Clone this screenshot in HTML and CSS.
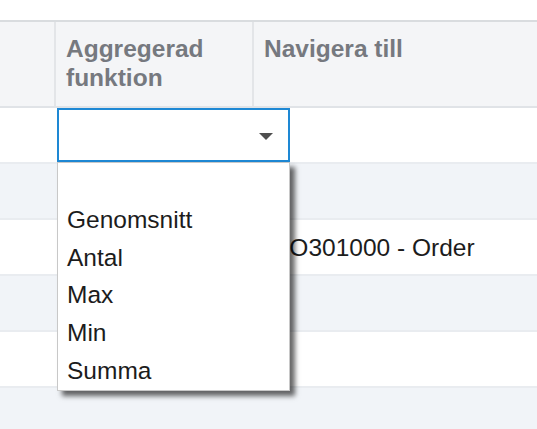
FILE: index.html
```html
<!DOCTYPE html>
<html lang="sv">
<head>
<meta charset="utf-8">
<title>Grid</title>
<link rel="stylesheet" href="styles.css">
</head>
<body>
<div class="page">
  <div class="grid">
    <div class="row header">
      <div class="cell c1"></div>
      <div class="cell c2">Aggregerad<br>funktion</div>
      <div class="cell c3">Navigera till</div>
    </div>
    <div class="row odd"><div class="cell c1"></div><div class="cell c2"></div><div class="cell c3"></div></div>
    <div class="row even"><div class="cell c1"></div><div class="cell c2"></div><div class="cell c3"></div></div>
    <div class="row odd"><div class="cell c1"></div><div class="cell c2"></div><div class="cell c3 value">SO301000 - Order</div></div>
    <div class="row even"><div class="cell c1"></div><div class="cell c2"></div><div class="cell c3"></div></div>
    <div class="row odd"><div class="cell c1"></div><div class="cell c2"></div><div class="cell c3"></div></div>
    <div class="row even"><div class="cell c1"></div><div class="cell c2"></div><div class="cell c3"></div></div>
  </div>

  <div class="editor">
    <div class="select"><span class="arrow"></span></div>
    <ul class="list">
      <li class="item"></li>
      <li class="item">Genomsnitt</li>
      <li class="item">Antal</li>
      <li class="item">Max</li>
      <li class="item">Min</li>
      <li class="item">Summa</li>
    </ul>
  </div>
</div>
</body>
</html>
```

FILE: styles.css
```css
html, body {
  margin: 0;
  padding: 0;
  background: #ffffff;
}
.page {
  position: relative;
  width: 537px;
  height: 429px;
  overflow: hidden;
  padding-top: 20px;
  box-sizing: border-box;
  font-family: "Liberation Sans", Arial, sans-serif;
}
.grid {
  border-top: 2px solid #d9dcdf;
}
.row {
  display: grid;
  grid-template-columns: 56px 198px 1fr;
  height: 56px;
  box-sizing: border-box;
  border-bottom: 2px solid #e9ecf0;
}
.row.header {
  height: 86px;
  background: #f4f5f7;
  border-bottom: 2px solid #e0e3e7;
}
.row.odd { background: #ffffff; }
.row.even { background: #f1f4f8; }
.header .cell {
  padding: 13px 10px 0 10px;
  font-weight: bold;
  font-size: 24.5px;
  line-height: 28.5px;
  color: #76797f;
}
.header .c1, .header .c2 {
  border-right: 2px solid #e3e5e8;
}
.cell {
  box-sizing: border-box;
  min-width: 0;
  white-space: nowrap;
}
.value {
  display: flex;
  align-items: center;
  padding-left: 19px;
  padding-top: 2px;
  font-size: 24.5px;
  color: #1c1c1c;
}
.editor {
  position: absolute;
  left: 57px;
  top: 108px;
  width: 233px;
}
.select {
  height: 54px;
  box-sizing: border-box;
  border: 2px solid #1e88d4;
  background: #ffffff;
  display: flex;
  align-items: center;
  justify-content: flex-end;
  padding-right: 15px;
  padding-top: 2px;
}
.arrow {
  width: 0;
  height: 0;
  border-left: 7px solid transparent;
  border-right: 7px solid transparent;
  border-top: 7px solid #4f4f4f;
}
.list {
  margin: 0;
  padding: 0;
  list-style: none;
  background: #ffffff;
  border: 1px solid #c8c8c8;
  box-shadow: 5px 5px 5px rgba(0, 0, 0, 0.6);
}
.item {
  height: 37.8px;
  line-height: 37.8px;
  padding-left: 9px;
  font-size: 24.5px;
  color: #1c1c1c;
}
```
